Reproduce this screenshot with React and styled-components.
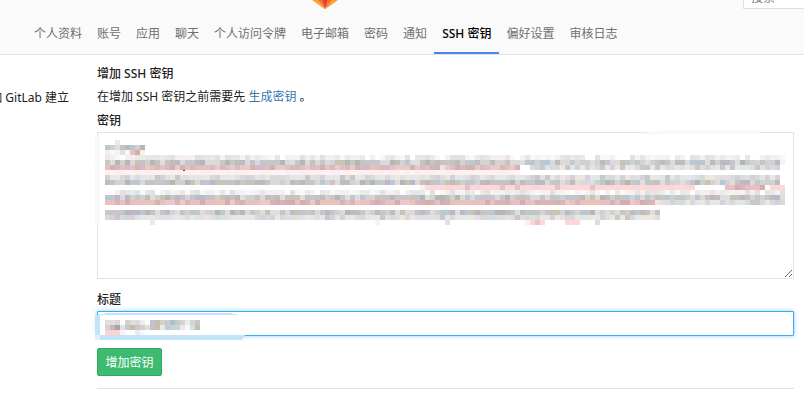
import React from "react";
import styled, { createGlobalStyle } from "styled-components";

const GlobalStyle = createGlobalStyle`
  *, *::before, *::after { box-sizing: border-box; }
  body {
    margin: 0;
    background: #fff;
    color: #222;
    font: 12px/18px "Noto Sans", "Noto Sans CJK SC", sans-serif;
    overflow-x: hidden;
  }
  button, input, textarea { font: inherit; }
`;

const Header = styled.header`
  background: #fafafa;
  border-bottom: 1px solid #e3e3e3;
`;

const TopBar = styled.div`
  display: flex;
  align-items: flex-end;
  height: 9px;
  overflow: hidden;
`;

const LogoArea = styled.div`
  flex: 1;
  display: flex;
  justify-content: center;
  padding-right: 93px;
`;

const LogoLink = styled.a`
  display: block;
  height: 34px;
`;

const Search = styled.input`
  width: 61px;
  height: 24px;
  padding: 0 7px;
  border: 1px solid #e0e0e0;
  border-right: 0;
  background: #fff;
  outline: 0;
  &::placeholder { color: #777; opacity: 1; }
`;

const TabList = styled.ul`
  display: flex;
  margin: 0;
  padding: 0 0 0 26px;
  list-style: none;
`;

const Tab = styled.li`
  margin-right: -1px;
`;

const TabLink = styled.a`
  display: block;
  height: 45px;
  padding: 16px 8px 0;
  white-space: nowrap;
  text-decoration: none;
  color: ${(p) => (p.$active ? "#000" : "#707070")};
  font-weight: ${(p) => (p.$active ? 500 : 400)};
  border-bottom: 2px solid ${(p) => (p.$active ? "#4688f1" : "transparent")};
`;

const Page = styled.main`
  display: flex;
  padding-right: 10px;
`;

const Intro = styled.aside`
  display: flex;
  justify-content: flex-end;
  flex: 0 0 97px;
  padding: 34px 28px 0 0;
  overflow: hidden;
  white-space: nowrap;
`;

const Content = styled.section`
  flex: 1;
  min-width: 0;
  padding-top: 10px;
`;

const Title = styled.h5`
  margin: 0 0 5px;
  font-size: 12px;
  font-weight: 500;
`;

const Hint = styled.p`
  margin: 0 0 6px;
`;

const Link = styled.a`
  color: #3777b0;
  text-decoration: none;
`;

const Label = styled.label`
  display: block;
  margin-bottom: 2px;
  font-weight: 500;
`;

const Field = styled.div`
  position: relative;
  margin-bottom: 12px;
`;

const KeyBox = styled.textarea`
  display: block;
  width: 100%;
  height: 147px;
  padding: 6px 8px;
  border: 1px solid #e3e3e3;
  background: #fff;
  outline: 0;
  resize: vertical;
`;

const TitleBox = styled.input`
  display: block;
  width: 100%;
  height: 25px;
  padding: 0 8px;
  border: 1px solid #3aabf0;
  border-radius: 1px;
  box-shadow: 0 0 4px rgba(58, 171, 240, 0.6);
  outline: 0;
`;

const Redaction = styled.svg`
  position: absolute;
  top: 0;
  left: 0;
  overflow: visible;
  pointer-events: none;
`;

const SubmitButton = styled.button`
  display: block;
  min-width: 65px;
  height: 28px;
  padding: 1px 7px 0;
  border: 1px solid #31a862;
  border-radius: 2px;
  background: #3dbb70;
  color: #fff;
  cursor: pointer;
`;

const Divider = styled.hr`
  margin: 12px 0 0;
  border: 0;
  border-top: 1px solid #e1e1e1;
`;

const tabs = [
  "个人资料", "账号", "应用", "聊天", "个人访问令牌", "电子邮箱",
  "密码", "通知", "SSH 密钥", "偏好设置", "审核日志",
];

const CELL = 5;

const palettes = {
  faint: ["#f3f3f3", "#e9ebe9", "#f8f8f8", "#e6e6e8", "#fefefe", "#f8eef2", "#e0e2e0", "#f0f0f5"],
  light: ["#dedede", "#e8e8e4", "#d6dcdc", "#e6e6e6", "#e3dfe2", "#d9d9d9", "#dfe7ea", "#ece7df", "#c8c8c8", "#d5d0dc"],
  mid: ["#c4c4c4", "#cfd1cd", "#bfbcbc", "#d3d3d3", "#c2c9c9", "#b3b8b5", "#dadada", "#c9c3cc", "#c8c3b5", "#b8c9d3", "#dededc", "#bdb8c6"],
  rose: ["#dfc0c0", "#d2b3b3", "#e9caca", "#cdb1b5", "#e7bfbf", "#d9b8b8", "#e5c9c4", "#dbb8c7"],
  blush: ["#fdf0f0", "#fff2f1", "#fdeeee", "#fbefef"],
  pink: ["#ffd7d8", "#ffd7d8", "#ffd5d6", "#fdd5d6", "#ffd7d8", "#ffd7d8", "#e9bfc4"],
  deep: ["#e9bfc1", "#dfb3b5", "#e8bdc4", "#d8abad", "#f1c6c6", "#d5b1b8", "#ebc2b7"],
};

// [row, first column, end column, palette]
const runs = [
  [0, 2, 3, "faint"], [1, 0, 8, "mid"], [2, 0, 4, "faint"], [2, 4, 5, "blush"], [2, 5, 7, "deep"], [2, 7, 8, "blush"],
  [3, 0, 136, "faint"], [4, 0, 135, "mid"], [4, 135, 136, "faint"],
  [5, 0, 67, "rose"], [5, 67, 68, "faint"], [5, 68, 83, "rose"], [5, 85, 135, "light"],
  [6, 0, 83, "blush"],
  [7, 0, 135, "light"], [8, 0, 135, "mid"],
  [9, 63, 64, "blush"], [9, 64, 118, "pink"], [9, 124, 132, "deep"], [9, 133, 136, "pink"],
  [10, 0, 136, "faint"], [11, 0, 136, "mid"],
  [12, 0, 110, "deep"], [12, 110, 136, "light"],
  [14, 0, 111, "mid"], [15, 0, 111, "light"],
  [16, 9, 10, "faint"], [16, 54, 55, "blush"], [16, 68, 69, "light"],
  [16, 84, 85, "blush"], [16, 85, 88, "pink"], [16, 92, 95, "pink"], [16, 98, 99, "light"],
];

const keyCells = runs.flatMap(([row, start, end, name]) => {
  const colors = palettes[name];
  let seed = (row + 3) * 791919 + start * 104729;
  return Array.from({ length: end - start }, (_, i) => {
    seed = (seed * 16807) % 2147483647;
    return { row, col: start + i, fill: colors[Math.floor((seed / 2147483647) * colors.length)] };
  });
});

const titleCells = [
  ["#dedede", "#dfdfdf", "#dbd7d9", "#fff", "#d2d2cb", "#dfdfda", "#d9dadf", "#eeeeef", "#fdfaf7", "#c4c2cc", "#c5bfb0", "#d5d0ca", "#c6ccd6", "#b4bdc2", "#c5cdcc", "#dccfcf", "#e2efef", "#d0d8d5", "#c5c8c5"],
  ["#d5d5d5", "#bdbab9", "#aca2a2", "#d9e5e9", "#c7c8c5", "#bdbdb6", "#cbcbc5", "#d2d0d2", "#dfdedb", "#c3c2ca", "#c9bdad", "#ebe9e5", "#bfced6", "#c5d2d9", "#c7d5d7", "#f2e5e3", "#effafd", "#d5e0da", "#bfc1bd"],
  ["#ffd2d2", "#ffd2d2", "#ffd2d2", "#fff1f1", "#fff", "#fdfdfd", "#f0e9e6", "#f6faff"],
].flatMap((line, row) => line.map((fill, col) => ({ row, col, fill })));

function Mosaic({ cells, x, y }) {
  return (
    <g transform={`translate(${x} ${y})`} shapeRendering="crispEdges">
      {cells.map((c) => (
        <rect key={`${c.row}-${c.col}`} x={c.col * CELL} y={c.row * CELL} width={CELL} height={CELL} fill={c.fill} />
      ))}
    </g>
  );
}

function Logo() {
  return (
    <svg width="36" height="34" viewBox="0 0 36 34" overflow="visible" aria-hidden="true">
      <path fill="#e24329" d="M2 14l9.38 0L7.35 1.67c-.22-.64-1.09-.64-1.29 0zM34 14h-9.38l4.03-12.33c.22-.64 1.09-.64 1.29 0zM18 34.38L11.38 14h13.24z" />
      <path fill="#fc6d26" d="M18 34.38L11.38 14H2zM18 34.38L24.62 14H34z" />
      <path fill="#fca326" d="M2 14L.1 20.16c-.18.56 0 1.2.5 1.56L18 34.38zM34 14l1.9 6.16c.18.56 0 1.2-.5 1.56L18 34.38z" />
    </svg>
  );
}

export default function App() {
  return (
    <>
      <GlobalStyle />
      <Header>
        <TopBar>
          <LogoArea>
            <LogoLink href="#" aria-label="GitLab"><Logo /></LogoLink>
          </LogoArea>
          <Search type="text" placeholder="搜索" aria-label="搜索" />
        </TopBar>
        <nav>
          <TabList>
            {tabs.map((name) => (
              <Tab key={name}>
                <TabLink href="#" $active={name === "SSH 密钥"}>{name}</TabLink>
              </Tab>
            ))}
          </TabList>
        </nav>
      </Header>
      <Page>
        <Intro>加 GitLab 建立</Intro>
        <Content>
          <Title>增加 SSH 密钥</Title>
          <Hint>在增加 SSH 密钥之前需要先 <Link href="#">生成密钥</Link> 。</Hint>
          <form onSubmit={(e) => e.preventDefault()}>
            <Label htmlFor="key">密钥</Label>
            <Field>
              <KeyBox id="key" />
              <Redaction width="697" height="147" aria-hidden="true">
                <path fill="#f8f8f8" d="M-2 4h5v30h-5zM-2 36h5v57h-5zM546 1l14-2 10-1h91l2 4H546z" />
                <Mosaic cells={keyCells} x={8} y={8} />
                <path fill="#b32020" d="M86 38h2v1h-2z" />
              </Redaction>
            </Field>
            <Label htmlFor="title">标题</Label>
            <Field>
              <TitleBox id="title" type="text" />
              <Redaction width="697" height="25" aria-hidden="true">
                <path fill="#c2e4f9" d="M-2 5l5-2v21h145l-3 5H3v-5h-5zM8 2h127v1h5v1H3V3h5z" />
                <path fill="#def1fd" d="M-2 24h5v5h-5z" />
                <path fill="#fff" d="M3 4h145v20H3z" />
                <Mosaic cells={titleCells} x={8} y={9} />
              </Redaction>
            </Field>
            <SubmitButton type="submit">增加密钥</SubmitButton>
          </form>
          <Divider />
        </Content>
      </Page>
    </>
  );
}
